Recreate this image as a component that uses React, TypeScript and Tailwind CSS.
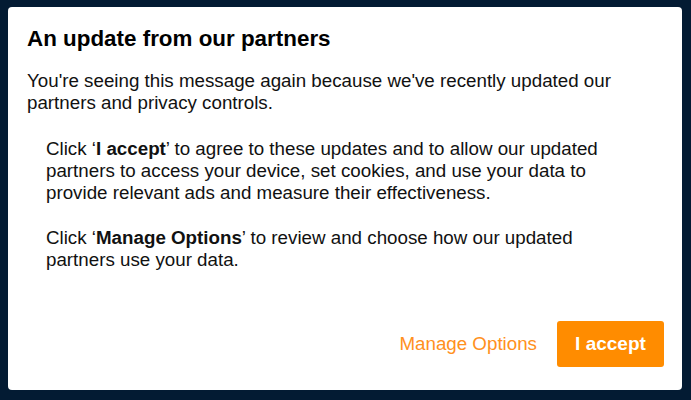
export default function App() {
  return (
    <div
      className="h-[400px] w-full bg-[#031b33] pt-[7px] pl-[8px] pr-[9px] pb-[10px] flex"
      style={{ fontFamily: '"Liberation Sans", Arial, sans-serif' }}
    >
      <div className="flex-1 bg-white rounded-[4px] flex flex-col">
        <div className="px-[19px] pt-[18px]">
          <h1 className="text-[22.4px] leading-[27px] font-bold text-black">An update from our partners</h1>
          <p className="mt-[18px] text-[18.75px] leading-[22px] text-[#111]">
            You're seeing this message again because we've recently updated our partners and privacy controls.
          </p>
          <div className="px-[19px]">
            <p className="mt-[24px] text-[18.75px] leading-[22px] text-[#111]">
              Click ‘<b>I accept</b>’ to agree to these updates and to allow our updated partners to access your
              device, set cookies, and use your data to provide relevant ads and measure their effectiveness.
            </p>
            <p className="mt-[23px] text-[18.75px] leading-[22px] text-[#111]">
              Click ‘<b>Manage Options</b>’ to review and choose how our updated partners use your data.
            </p>
          </div>
        </div>
        <div className="mt-auto flex justify-end items-center gap-[20px] pr-[18px] pb-[23px]">
          <button className="text-[18.75px] text-[#ff9020]">Manage Options</button>
          <button className="w-[107px] h-[46px] rounded-[3px] bg-[#ff8c00] text-white text-[19px] font-bold">
            I accept
          </button>
        </div>
      </div>
    </div>
  )
}
